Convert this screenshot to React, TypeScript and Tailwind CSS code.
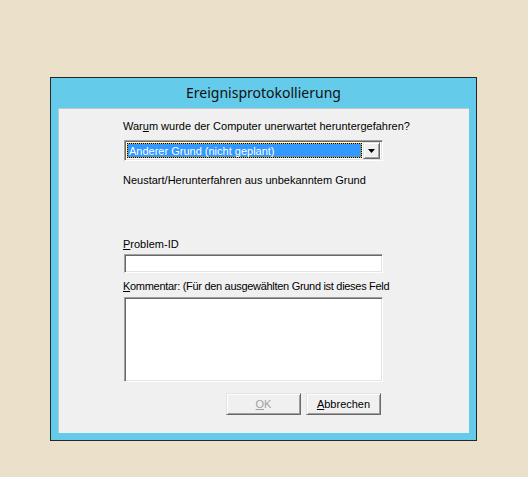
const sunken =
  "border border-t-[#a0a0a0] border-l-[#a0a0a0] border-r-white border-b-white shadow-[inset_1px_1px_0_#696969,inset_-1px_-1px_0_#e3e3e3]"
const raised =
  "border border-t-[#e3e3e3] border-l-[#e3e3e3] border-r-[#696969] border-b-[#696969] shadow-[inset_1px_1px_0_#ffffff,inset_-1px_-1px_0_#a0a0a0]"

function Label({ children, tight }: { children: React.ReactNode; tight?: boolean }) {
  return (
    <div className={`h-[13px] leading-[13px] whitespace-nowrap ${tight ? "tracking-[-0.3px]" : ""}`}>{children}</div>
  )
}

export default function App() {
  return (
    <div className="min-h-[477px] w-[528px] bg-[#ebe0c9] pl-[50px] pt-[77px] font-['Liberation_Sans',Arial,sans-serif] text-[11px] text-black">
      <div className="w-[427px] h-[364px] border border-[#262626] bg-[#65cbea] flex flex-col">
        <div className="h-[30px] flex items-center justify-center pb-[1px] text-[14px] font-['Noto_Sans',sans-serif] text-[#111]">
          Ereignisprotokollierung
        </div>
        <div className="mx-[7px] w-[411px] h-[325px] bg-[#f0f0f0] border-t border-l border-[#b9c9cf]">
          <div className="ml-[64px] w-[261px] flex flex-col">
            <div className="mt-[11px]">
              <Label>
                War<span className="underline">u</span>m wurde der Computer unerwartet heruntergefahren?
              </Label>
            </div>
            <div className={`mt-[7px] h-[21px] w-[259px] ml-[1px] flex items-center p-[2px] bg-white ${sunken}`}>
              <div className="flex-1 h-full bg-[#ffb000] border border-dotted border-black">
                <div className="h-full bg-[#3399ff] text-white leading-[15px] pl-[1px]">Anderer Grund (nicht geplant)</div>
              </div>
              <div className={`w-[17px] h-[17px] bg-[#f0f0f0] flex items-center justify-center ml-[1px] ${raised}`}>
                <svg width="7" height="4" viewBox="0 0 7 4">
                  <path d="M0 0h7L3.5 4z" fill="#000" />
                </svg>
              </div>
            </div>
            <div className="mt-[13px]">
              <Label>Neustart/Herunterfahren aus unbekanntem Grund</Label>
            </div>
            <div className="mt-[51px]">
              <Label>
                <span className="underline">P</span>roblem-ID
              </Label>
            </div>
            <div className={`mt-[3px] ml-[1px] h-[19px] w-[259px] bg-white ${sunken}`} />
            <div className="mt-[7px]">
              <Label tight>
                <span className="underline">K</span>ommentar: (Für den ausgewählten Grund ist dieses Feld
              </Label>
            </div>
            <div className={`mt-[4px] ml-[1px] h-[85px] w-[259px] bg-white ${sunken}`} />
            <div className="mt-[11px] flex justify-end gap-[5px] pr-[3px]">
              <div className={`w-[75px] h-[22px] flex items-center justify-center text-[#a0a0a0] bg-[#f0f0f0] ${raised}`}>
                <span className="underline">O</span>K
              </div>
              <div className={`w-[75px] h-[22px] flex items-center justify-center bg-[#f0f0f0] ${raised}`}>
                <span className="underline">A</span>bbrechen
              </div>
            </div>
          </div>
        </div>
      </div>
    </div>
  )
}
